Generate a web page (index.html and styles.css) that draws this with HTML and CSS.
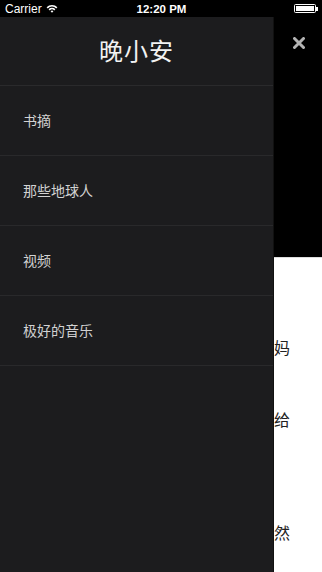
FILE: index.html
```html
<!DOCTYPE html>
<html lang="zh">
<head>
<meta charset="utf-8">
<link rel="stylesheet" href="styles.css">
</head>
<body>
<div class="screen">
  <div class="statusbar">
    <div class="sb-left">
      <span class="carrier">Carrier</span>
      <svg class="wifi" width="12" height="9" viewBox="0 0 12 9">
        <path d="M0.6 3.2 A7.5 7.5 0 0 1 11.4 3.2 L10.2 4.4 A5.8 5.8 0 0 0 1.8 4.4 Z" fill="#fff"/>
        <path d="M2.6 5.2 A4.7 4.7 0 0 1 9.4 5.2 L8.2 6.4 A3 3 0 0 0 3.8 6.4 Z" fill="#fff"/>
        <path d="M4.6 7.2 A2 2 0 0 1 7.4 7.2 L6 8.7 Z" fill="#fff"/>
      </svg>
    </div>
    <div class="time">12:20 PM</div>
    <div class="sb-right">
      <div class="battery"><div class="battery-fill"></div></div>
      <div class="battery-tip"></div>
    </div>
  </div>
  <div class="main">
    <nav class="drawer">
      <div class="drawer-title">晚小安</div>
      <div class="menu-item">书摘</div>
      <div class="menu-item">那些地球人</div>
      <div class="menu-item">视频</div>
      <div class="menu-item">极好的音乐</div>
    </nav>
    <div class="peek">
      <div class="peek-top">
        <svg class="close" width="12" height="12" viewBox="0 0 12 12">
          <path d="M1.5 1.5 L10.5 10.5 M10.5 1.5 L1.5 10.5" stroke="#b4b4b4" stroke-width="3" stroke-linecap="round"/>
        </svg>
      </div>
      <div class="peek-content">
        <div class="peek-char c1">妈</div>
        <div class="peek-char c2">给</div>
        <div class="peek-char c3">然</div>
      </div>
    </div>
  </div>
</div>
</body>
</html>
```

FILE: styles.css
```css
* { box-sizing: border-box; }
html, body { margin: 0; padding: 0; background: #000; }
.screen {
  width: 322px;
  height: 572px;
  display: flex;
  flex-direction: column;
  overflow: hidden;
  font-family: "Noto Sans CJK SC", "Liberation Sans", sans-serif;
}
.statusbar {
  height: 17px;
  flex: none;
  background: #000;
  color: #fff;
  display: flex;
  align-items: center;
  justify-content: space-between;
  padding: 0 4px 0 5px;
  font-family: "Liberation Sans", Arial, sans-serif;
  font-size: 12px;
}
.sb-left { display: flex; align-items: center; gap: 4px; width: 80px; }
.wifi { margin-top: -1px; }
.time {
  font-weight: bold;
  font-size: 11.5px;
}
.sb-right { display: flex; align-items: center; justify-content: flex-end; width: 80px; }
.battery {
  width: 22px;
  height: 9px;
  border: 1px solid #fff;
  border-radius: 1.5px;
  padding: 1px;
}
.battery-fill { width: 100%; height: 100%; background: #fff; }
.battery-tip { width: 1.5px; height: 4px; background: #fff; margin-left: 0.5px; }
.main {
  flex: 1;
  display: flex;
  min-height: 0;
}
.drawer {
  width: 274px;
  flex: none;
  background: #1c1c1e;
  display: flex;
  flex-direction: column;
  border-right: 1px solid #111;
}
.drawer-title {
  height: 69px;
  flex: none;
  display: flex;
  align-items: center;
  justify-content: center;
  color: #f2f2f2;
  font-size: 24px;
  letter-spacing: 1px;
  padding-bottom: 3px;
  border-bottom: 1px solid #2a2a2c;
}
.menu-item {
  height: 70px;
  flex: none;
  display: flex;
  align-items: center;
  padding-left: 23px;
  padding-bottom: 2px;
  color: #d2d2d2;
  font-size: 14px;
  border-bottom: 1px solid #29292b;
}
.peek {
  flex: 1;
  display: flex;
  flex-direction: column;
  min-width: 0;
}
.peek-top {
  height: 240px;
  flex: none;
  background: #000;
  display: flex;
  justify-content: center;
  padding-top: 20px;
  padding-left: 1px;
}
.close { display: block; }
.peek-content {
  flex: 1;
  background: #fff;
  border-top: 1px solid #ddd;
  display: flex;
  flex-direction: column;
  color: #222;
  font-size: 16px;
  line-height: 20px;
}
.peek-char { height: 20px; }
.c1 { margin-top: 79px; }
.c2 { margin-top: 52px; }
.c3 { margin-top: 93px; }
```
